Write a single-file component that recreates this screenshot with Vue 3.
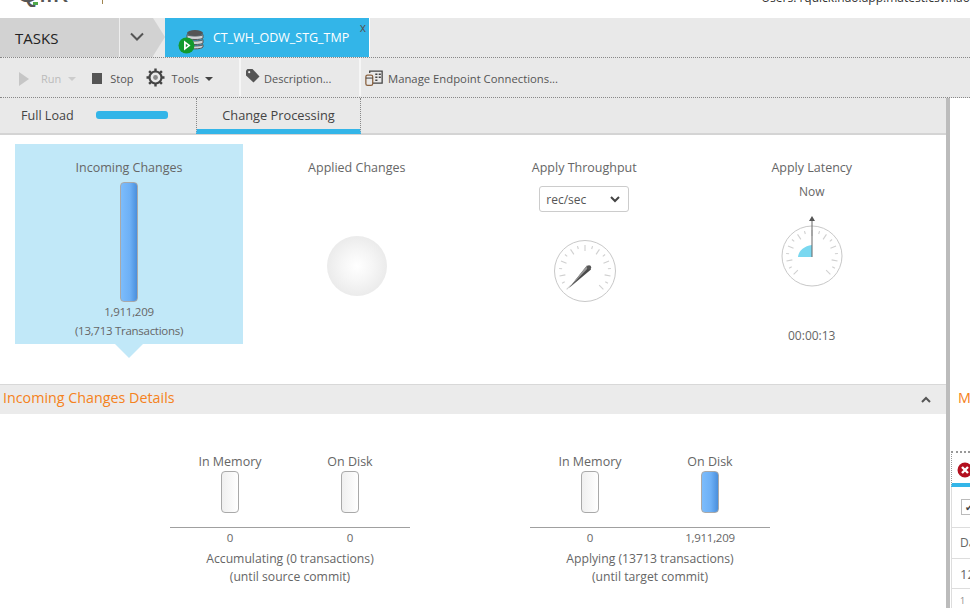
<script setup>
const makeTicks = (cx, cy) => {
  const out = []
  for (let i = 0; i <= 16; i++) {
    const a = ((-135 + i * 16.875) * Math.PI) / 180
    const r1 = i % 2 ? 23 : 20
    const r2 = 26
    out.push({
      x1: cx + r1 * Math.sin(a),
      y1: cy - r1 * Math.cos(a),
      x2: cx + r2 * Math.sin(a),
      y2: cy - r2 * Math.cos(a),
    })
  }
  return out
}
const ticks = makeTicks(32, 32)
const details = [
  {
    caption: 'Accumulating (0 transactions)',
    sub: '(until source commit)',
    cols: [
      { label: 'In Memory', value: '0', full: false },
      { label: 'On Disk', value: '0', full: false },
    ],
  },
  {
    caption: 'Applying (13713 transactions)',
    sub: '(until target commit)',
    cols: [
      { label: 'In Memory', value: '0', full: false },
      { label: 'On Disk', value: '1,911,209', full: true },
    ],
  },
]
</script>

<template>
  <div class="app">
    <header class="top">
      <span class="logo">Qlik</span>
      <span class="logo-tail"></span>
      <span class="logo-tick"></span>
      <span class="user">Users: rquick.nao.app.matest.csv.nao</span>
    </header>

    <nav class="tabbar">
      <div class="tasks">TASKS</div>
      <div class="chev">
        <svg width="14" height="10" viewBox="0 0 14 10"><path d="M1 1.500 7 7.500 13 1.500" fill="none" stroke="#555" stroke-width="2"/></svg>
      </div>
      <div class="arrow"></div>
      <div class="task-tab">
        <svg class="task-icon" width="26" height="26" viewBox="0 0 26 26">
          <ellipse cx="17" cy="4" rx="8" ry="3" fill="#555"/>
          <path d="M9 5.500c1 2 15 2 16 0V9c-1 2-15 2-16 0zM9 10.500c1 2 15 2 16 0V14c-1 2-15 2-16 0zM9 15.500c1 2 15 2 16 0V18c-1 2.500-15 2.500-16 0z" fill="#cfd3d6" stroke="#555" stroke-width="1"/>
          <circle cx="8.500" cy="16.500" r="8" fill="#129a2d"/>
          <path d="M6 11.500 12.500 16.500 6 21.500z" fill="#fff"/>
          <path d="M7.800 14.800 10 16.500 7.800 18.200z" fill="#129a2d"/>
        </svg>
        <span class="task-name">CT_WH_ODW_STG_TMP</span>
        <span class="task-close">x</span>
      </div>
    </nav>

    <div class="toolbar">
      <div class="tool-group first">
        <svg class="i-play" width="10" height="14" viewBox="0 0 10 14"><path d="M0 0 10 7 0 14z" fill="#c6c6c6"/></svg>
        <span class="disabled run">Run</span>
        <span class="caret light"></span>
        <span class="stop"></span>
        <span class="stop-label">Stop</span>
        <svg class="gear" width="19" height="19" viewBox="0 0 19 19">
          <circle cx="9.500" cy="9.500" r="6" fill="none" stroke="#444" stroke-width="2.200"/>
          <circle cx="9.500" cy="9.500" r="2.400" fill="#8a8a8a"/>
          <g stroke="#444" stroke-width="2.400">
            <path d="M9.500 0.500v3M9.500 15.500v3M0.500 9.500h3M15.500 9.500h3M3.100 3.100l2.100 2.100M13.800 13.800l2.100 2.100M3.100 15.900l2.100-2.100M13.800 5.200l2.100-2.100"/>
          </g>
        </svg>
        <span class="tools-label">Tools</span>
        <span class="caret"></span>
      </div>
      <div class="tool-group desc">
        <svg class="tag" width="14" height="15" viewBox="0 0 14 15"><path d="M0 1.500 1.500 0H6.500L13.500 7.500 7.500 13.500 0 6.500z" fill="#555"/><circle cx="3.200" cy="3.200" r="1.100" fill="#e9e9e9"/></svg>
        <span>Description...</span>
      </div>
      <div class="tool-group manage">
        <svg width="18" height="17" viewBox="0 0 21 19">
          <path d="M5.500 3V0.800H20V15H9" fill="none" stroke="#444" stroke-width="1.500"/>
          <path d="M12 4.500h2.500M16 4.500h2.500M12 8h2.500M16 8h2.500M12 11.500h2.500" stroke="#444" stroke-width="1.700"/>
          <rect x="1" y="5.500" width="8" height="12" rx="2" fill="#e9e9e9" stroke="#8a6240" stroke-width="1.500"/>
          <path d="M1 9h8" stroke="#444" stroke-width="1.200"/>
        </svg>
        <span>Manage Endpoint Connections...</span>
      </div>
    </div>

    <div class="body">
      <main class="left">
        <div class="subtabs">
          <div class="full-load">
            <span>Full Load</span>
            <span class="progress"></span>
          </div>
          <div class="change-tab">Change Processing</div>
        </div>

        <section class="cards">
          <div class="card selected">
            <div class="card-title">Incoming Changes</div>
            <div class="bar tall"></div>
            <div class="val">1,911,209</div>
            <div class="val trans">(13,713 Transactions)</div>
          </div>
          <div class="card">
            <div class="card-title">Applied Changes</div>
            <div class="orb"></div>
          </div>
          <div class="card">
            <div class="card-title">Apply Throughput</div>
            <div class="select">
              <span>rec/sec</span>
              <svg width="10" height="7" viewBox="0 0 10 7"><path d="M1 1 5 5 9 1" fill="none" stroke="#444" stroke-width="2"/></svg>
            </div>
            <svg class="gauge thr" width="64" height="64" viewBox="0 0 64 64">
              <circle cx="32" cy="32" r="30.500" fill="#fff" stroke="#c8c8c8" stroke-width="1"/>
              <line v-for="(t, i) in ticks" :key="i" :x1="t.x1" :y1="t.y1" :x2="t.x2" :y2="t.y2" stroke="#d0d0d0" stroke-width="1.100"/>
              <path d="M34 26.500 38 30.500 16 49z" fill="#4a4a4a"/>
              <path d="M34 26.500 35.500 28.500 16 49z" fill="#999"/>
              <circle cx="36" cy="28.500" r="2.200" fill="#555"/>
            </svg>
          </div>
          <div class="card">
            <div class="card-title">Apply Latency</div>
            <div class="now">Now</div>
            <svg class="gauge lat" width="64" height="74" viewBox="0 0 64 74">
              <circle cx="32" cy="42" r="30" fill="#fff" stroke="#c8c8c8" stroke-width="1"/>
              <g transform="translate(0 10)">
                <line v-for="(t, i) in ticks" :key="i" :x1="t.x1" :y1="t.y1" :x2="t.x2" :y2="t.y2" stroke="#d0d0d0" stroke-width="1.100"/>
              </g>
              <path d="M32 43H18C18.500 37 24 32 32 31z" fill="#7ad8f0"/>
              <line x1="32" y1="43" x2="32" y2="4" stroke="#666" stroke-width="1"/>
              <path d="M32 2 35 7H29z" fill="#555"/>
            </svg>
            <div class="lat-time">00:00:13</div>
          </div>
        </section>

        <div class="section-head">
          <span class="head-text">Incoming Changes Details</span>
          <svg width="10" height="7" viewBox="0 0 10 7"><path d="M1 6 5 2 9 6" fill="none" stroke="#555" stroke-width="2"/></svg>
        </div>

        <section class="details">
          <div v-for="d in details" :key="d.caption" class="detail">
            <div class="detail-cols top-cols">
              <div v-for="c in d.cols" :key="c.label" class="detail-col">
                <div class="col-label">{{ c.label }}</div>
                <div class="bar small" :class="{ empty: !c.full }"></div>
              </div>
            </div>
            <div class="detail-cols value-cols">
              <div v-for="c in d.cols" :key="c.label" class="detail-col">{{ c.value }}</div>
            </div>
            <div class="caption">{{ d.caption }}</div>
            <div class="caption">{{ d.sub }}</div>
          </div>
        </section>
      </main>

      <div class="splitter"></div>

      <aside class="right">
        <div class="right-title">M</div>
        <div class="right-tab">
          <svg width="16" height="16" viewBox="0 0 16 16">
            <circle cx="8" cy="8" r="7.500" fill="#b3101f"/>
            <path d="M5 5 11 11M11 5 5 11" stroke="#fff" stroke-width="2.400"/>
          </svg>
        </div>
        <div class="right-table">
          <div class="check-row"><span class="check">✔</span></div>
          <div class="r-row head">Da</div>
          <div class="r-row">12</div>
          <div class="r-row small">1</div>
        </div>
      </aside>
    </div>
  </div>
</template>

<style>
html, body { margin: 0; background: #fff; }
</style>

<style scoped>
.app {
  width: 970px;
  height: 608px;
  overflow: hidden;
  font-family: "Open Sans", "Noto Sans", sans-serif;
  font-size: 12px;
  color: #666;
  background: #fff;
  display: flex;
  flex-direction: column;
}
.top {
  height: 18px;
  flex: none;
  overflow: hidden;
  position: relative;
}
.logo {
  position: absolute;
  left: 16px;
  top: -25px;
  font-size: 30px;
  line-height: 34px;
  color: #555;
  font-family: "Liberation Sans", sans-serif;
}
.logo-tail {
  position: absolute;
  left: 33px;
  top: 2px;
  width: 5px;
  height: 3px;
  background: #4fa84a;
}
.logo-tick {
  position: absolute;
  left: 102px;
  top: 0;
  width: 1px;
  height: 4px;
  background: #a08550;
}
.user {
  position: absolute;
  right: 0;
  top: -11px;
  font-size: 12px;
  line-height: 17px;
  white-space: nowrap;
  color: #333;
}
.tabbar {
  height: 39px;
  flex: none;
  background: #e9e9e9;
  display: flex;
  border-bottom: 1px dotted #888;
}
.tasks {
  width: 104px;
  padding-left: 15px;
  background: #d2d2d2;
  border-right: 1px solid #eee;
  font-size: 15px;
  line-height: 40px;
  color: #222;
}
.chev {
  width: 33px;
  background: #d2d2d2;
  display: flex;
  align-items: center;
  justify-content: center;
  padding-bottom: 2px;
  box-sizing: border-box;
}
.arrow {
  width: 0;
  height: 0;
  border-top: 19.500px solid transparent;
  border-bottom: 19.500px solid transparent;
  border-left: 12px solid #d2d2d2;
}
.task-tab {
  width: 204px;
  background: #33b5e8;
  display: flex;
  align-items: center;
  position: relative;
  border-right: 1px solid #fff;
}
.task-icon { margin-left: 13px; margin-top: 8px; flex: none; }
.task-name {
  margin-left: 9px;
  color: #fff;
  font-size: 12.500px;
  white-space: nowrap;
}
.task-close {
  position: absolute;
  top: 3px;
  right: 3px;
  font-size: 12px;
  line-height: 14px;
  color: #555;
}
.toolbar {
  height: 39px;
  flex: none;
  background: #e9e9e9;
  display: flex;
  border-bottom: 1px dotted #888;
  font-size: 11px;
  color: #555;
}
.tool-group {
  display: flex;
  align-items: center;
  border-right: 2px solid #f6f6f6;
  height: 38px;
  box-sizing: border-box;
  padding-top: 3px;
}
.first { width: 241px; padding-left: 19px; }
.i-play { margin-right: 12px; }
.disabled { color: #bbb; }
.caret {
  width: 0;
  height: 0;
  border-left: 4px solid transparent;
  border-right: 4px solid transparent;
  border-top: 4px solid #444;
  margin-left: 6px;
}
.caret.light { border-top-color: #ccc; margin-left: 7px; margin-top: 1px; }
.stop {
  width: 10px;
  height: 11px;
  background: #555;
  margin-left: 16px;
}
.stop-label { margin-left: 8px; }
.gear { margin-left: 12px; flex: none; margin-top: -3px; }
.tools-label { margin-left: 7px; }
.desc { width: 120px; padding-left: 5px; }
.desc span { margin-left: 4px; }
.tag { margin-top: -5px; }
.manage { border-right: none; padding-left: 4px; }
.manage span { margin-left: 5px; font-size: 11.300px; }
.body {
  flex: 1;
  display: flex;
  min-height: 0;
}
.left {
  width: 946px;
  flex: none;
  display: flex;
  flex-direction: column;
}
.subtabs {
  height: 35px;
  flex: none;
  background: #e9e9e9;
  border-bottom: 2px solid #d4d4d4;
  display: flex;
  font-size: 12.800px;
  color: #444;
}
.full-load {
  width: 175px;
  padding-left: 21px;
  display: flex;
  align-items: center;
  gap: 22px;
  height: 34px;
  font-size: 12.600px;
}
.progress {
  width: 72px;
  height: 8px;
  border-radius: 3px;
  background: #33b5e8;
}
.change-tab {
  width: 165px;
  box-sizing: border-box;
  border-left: 1px dotted #888;
  border-right: 1px dotted #888;
  border-bottom: 5px solid #33b5e8;
  height: 36px;
  text-align: center;
  line-height: 34px;
  white-space: nowrap;
}
.cards {
  height: 249px;
  flex: none;
  display: flex;
  padding: 9px 0 0 15px;
  box-sizing: border-box;
}
.card {
  width: 227.500px;
  height: 200px;
  display: flex;
  flex-direction: column;
  align-items: center;
  position: relative;
  flex: none;
}
.card.selected { background: #c1e8f8; width: 228px; }
.card.selected::after {
  content: "";
  position: absolute;
  left: 100px;
  top: 200px;
  border-left: 14px solid transparent;
  border-right: 14px solid transparent;
  border-top: 14px solid #c1e8f8;
}
.card-title {
  margin-top: 15px;
  line-height: 18px;
  height: 18px;
  white-space: nowrap;
  font-size: 12.500px;
}
.bar {
  width: 18px;
  box-sizing: border-box;
  border: 1px solid #a9a9a9;
  border-radius: 4px;
  background: linear-gradient(90deg, #7cbcfb 0%, #6db0f6 55%, #4a8fdc 100%);
}
.bar.tall { height: 120px; margin-top: 5px; }
.bar.small { height: 42px; }
.bar.empty { background: linear-gradient(90deg, #efefef, #fff); }
.val { line-height: 18px; margin-top: 1px; white-space: nowrap; font-size: 11.500px; letter-spacing: -0.280px; }
.trans { margin-top: 1px; }
.orb {
  width: 60px;
  height: 60px;
  border-radius: 50%;
  margin-top: 59px;
  background: radial-gradient(circle, #fff 0%, #f6f6f6 35%, #e2e2e2 100%);
}
.select {
  width: 90px;
  height: 26px;
  box-sizing: border-box;
  margin-top: 9px;
  border: 1px solid #ccc;
  border-radius: 3px;
  background: #fff;
  display: flex;
  align-items: center;
  justify-content: space-between;
  padding: 1px 8px 0 6px;
  color: #555;
}
.gauge { flex: none; display: block; }
.gauge.thr { margin: 27px 0 0 1px; }
.now { line-height: 18px; margin-top: 6px; }
.gauge.lat { margin-top: 13px; }
.lat-time { margin-top: 39px; line-height: 18px; }
.section-head {
  height: 30px;
  flex: none;
  box-sizing: border-box;
  background: #ebebeb;
  border-top: 1px solid #d8d8d8;
  display: flex;
  align-items: center;
  justify-content: space-between;
  padding: 0 15px 0 3px;
  color: #f58220;
  font-size: 14.300px;
}
.head-text { margin-top: -4px; }
.details {
  display: flex;
  gap: 120px;
  padding: 38px 0 0 170px;
}
.detail {
  width: 240px;
  text-align: center;
  flex: none;
}
.detail-cols { display: flex; }
.detail-col {
  width: 120px;
  display: flex;
  flex-direction: column;
  align-items: center;
  white-space: nowrap;
}
.col-label { line-height: 18px; margin-top: 1px; font-size: 12.500px; }
.top-cols {
  height: 75px;
  border-bottom: 1px solid #a0a0a0;
}
.value-cols { line-height: 18px; margin-top: 1px; margin-bottom: 3px; font-size: 11.500px; letter-spacing: -0.280px; }
.caption { line-height: 18px; white-space: nowrap; font-size: 12.200px; }
.splitter {
  width: 4px;
  flex: none;
  background: #bcbcbc;
}
.right {
  flex: 1;
  min-width: 0;
  overflow: hidden;
}
.right-title {
  margin-top: 285px;
  padding-left: 8px;
  height: 30px;
  line-height: 29px;
  color: #f58220;
  font-size: 14.300px;
}
.right-tab {
  margin: 38px 0 0 1px;
  border-top: 2px dotted #999;
  border-left: 1px dotted #999;
  border-bottom: 4px solid #33b5e8;
  padding: 9px 0 0 5px;
  box-sizing: border-box;
  height: 36px;
}
.right-table { border-left: 1px solid #ddd; margin-left: 1px; }
.check-row { height: 41px; padding: 12px 0 0 9px; box-sizing: border-box; border-bottom: 1px solid #ddd; }
.check {
  display: block;
  width: 16px;
  height: 16px;
  box-sizing: border-box;
  border: 1px solid #bbb;
  font-size: 10px;
  line-height: 14px;
  color: #444;
  text-align: center;
}
.r-row {
  height: 31px;
  padding-left: 8px;
  line-height: 30px;
  border-bottom: 1px solid #ddd;
  box-sizing: border-box;
  white-space: nowrap;
  font-size: 12px;
}
.r-row:nth-child(3) { height: 30px; font-size: 13px; }
.r-row.small { border: 0; font-size: 9px; color: #888; line-height: 24px; }
</style>
